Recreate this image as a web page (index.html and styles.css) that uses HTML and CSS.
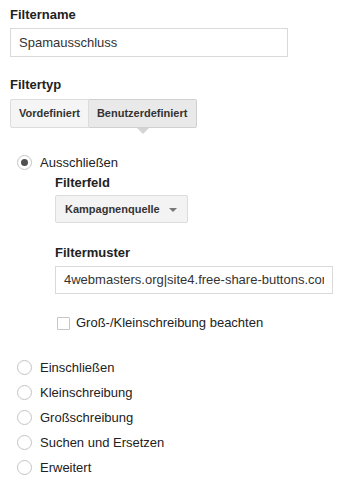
FILE: index.html
```html
<!DOCTYPE html>
<html lang="de">
<head>
<meta charset="utf-8">
<link rel="stylesheet" href="styles.css">
</head>
<body>
<div class="page">
  <div class="label">Filtername</div>
  <div class="textbox name"><span class="value">Spamausschluss</span></div>

  <div class="label type-label">Filtertyp</div>
  <div class="tabs">
    <div class="tab">Vordefiniert</div>
    <div class="tab active">Benutzerdefiniert</div>
  </div>

  <div class="radio-row first"><span class="radio checked"></span><span>Ausschließen</span></div>
  <div class="sub">
    <div class="label">Filterfeld</div>
    <div class="select"><span>Kampagnenquelle</span><span class="caret"></span></div>
    <div class="label pattern-label">Filtermuster</div>
    <div class="textbox pattern"><span class="value">4webmasters.org|site4.free-share-buttons.com</span></div>
    <div class="check-row"><span class="checkbox"></span><span>Groß-/Kleinschreibung beachten</span></div>
  </div>

  <div class="radio-list">
    <div class="radio-row"><span class="radio"></span><span>Einschließen</span></div>
    <div class="radio-row"><span class="radio"></span><span>Kleinschreibung</span></div>
    <div class="radio-row"><span class="radio"></span><span>Großschreibung</span></div>
    <div class="radio-row"><span class="radio"></span><span>Suchen und Ersetzen</span></div>
    <div class="radio-row"><span class="radio"></span><span>Erweitert</span></div>
  </div>
</div>
</body>
</html>
```

FILE: styles.css
```css
html, body {
  margin: 0;
  padding: 0;
  background: #fff;
}
body {
  font-family: "Liberation Sans", Arial, sans-serif;
  font-size: 13px;
  color: #222;
}
.page {
  padding: 7px 0 0 10px;
}
.label {
  font-weight: bold;
  font-size: 13px;
  line-height: 16px;
  color: #222;
}
.textbox {
  box-sizing: border-box;
  border: 1px solid #d9d9d9;
  color: #333;
  font-size: 13px;
  line-height: 27px;
  padding: 0 8px;
}
.textbox .value {
  display: block;
  white-space: nowrap;
  overflow: hidden;
}
.name {
  margin-top: 5px;
  width: 278px;
  height: 29px;
}
.type-label {
  margin-top: 20px;
}
.tabs {
  margin-top: 6px;
  display: flex;
  width: max-content;
}
.tab {
  position: relative;
  box-sizing: border-box;
  height: 29px;
  line-height: 27px;
  padding: 0 8px;
  font-size: 11px;
  font-weight: bold;
  color: #333;
  background: #f5f5f5;
  border: 1px solid #dcdcdc;
  border-radius: 2px 0 0 2px;
}
.tab.active {
  background: #e9e9e9;
  border-left: none;
  border-color: #d0d0d0;
  border-radius: 0 2px 2px 0;
  padding: 0 9px 0 8px;
}
.tab.active::after {
  content: "";
  position: absolute;
  left: 50%;
  bottom: -7px;
  margin-left: -6px;
  border-left: 6px solid transparent;
  border-right: 6px solid transparent;
  border-top: 6px solid #d4d4d4;
}
.radio-row {
  display: flex;
  align-items: center;
  height: 25px;
  line-height: 25px;
  font-size: 13px;
  color: #222;
}
.radio-row.first {
  margin-top: 22px;
}
.radio {
  box-sizing: border-box;
  width: 15px;
  height: 15px;
  margin-left: 7px;
  margin-right: 8px;
  border: 1px solid #c4c4c4;
  border-radius: 50%;
  background: #fff;
  display: flex;
  align-items: center;
  justify-content: center;
}
.radio.checked::before {
  content: "";
  width: 7px;
  height: 7px;
  border-radius: 50%;
  background: #505050;
}
.sub {
  margin-left: 45px;
}
.select {
  box-sizing: border-box;
  margin-top: 4px;
  width: 133px;
  height: 28px;
  display: flex;
  align-items: center;
  justify-content: space-between;
  padding: 0 10px 0 9px;
  background: #f3f3f3;
  border: 1px solid #dcdcdc;
  border-radius: 2px;
  font-size: 11px;
  font-weight: bold;
  color: #333;
}
.caret {
  width: 0;
  height: 0;
  border-left: 4px solid transparent;
  border-right: 4px solid transparent;
  border-top: 4px solid #777;
  margin-top: 2px;
}
.pattern-label {
  margin-top: 22px;
}
.pattern {
  margin-top: 5px;
  width: 278px;
  height: 28px;
  line-height: 26px;
}
.check-row {
  margin-top: 21px;
  display: flex;
  align-items: center;
  height: 16px;
  line-height: 16px;
  color: #222;
}
.checkbox {
  box-sizing: border-box;
  width: 13px;
  height: 13px;
  margin-left: 2px;
  margin-right: 6px;
  border: 1px solid #c6c6c6;
  border-radius: 1px;
  background: #fff;
}
.radio-list {
  margin-top: 24px;
}
```
